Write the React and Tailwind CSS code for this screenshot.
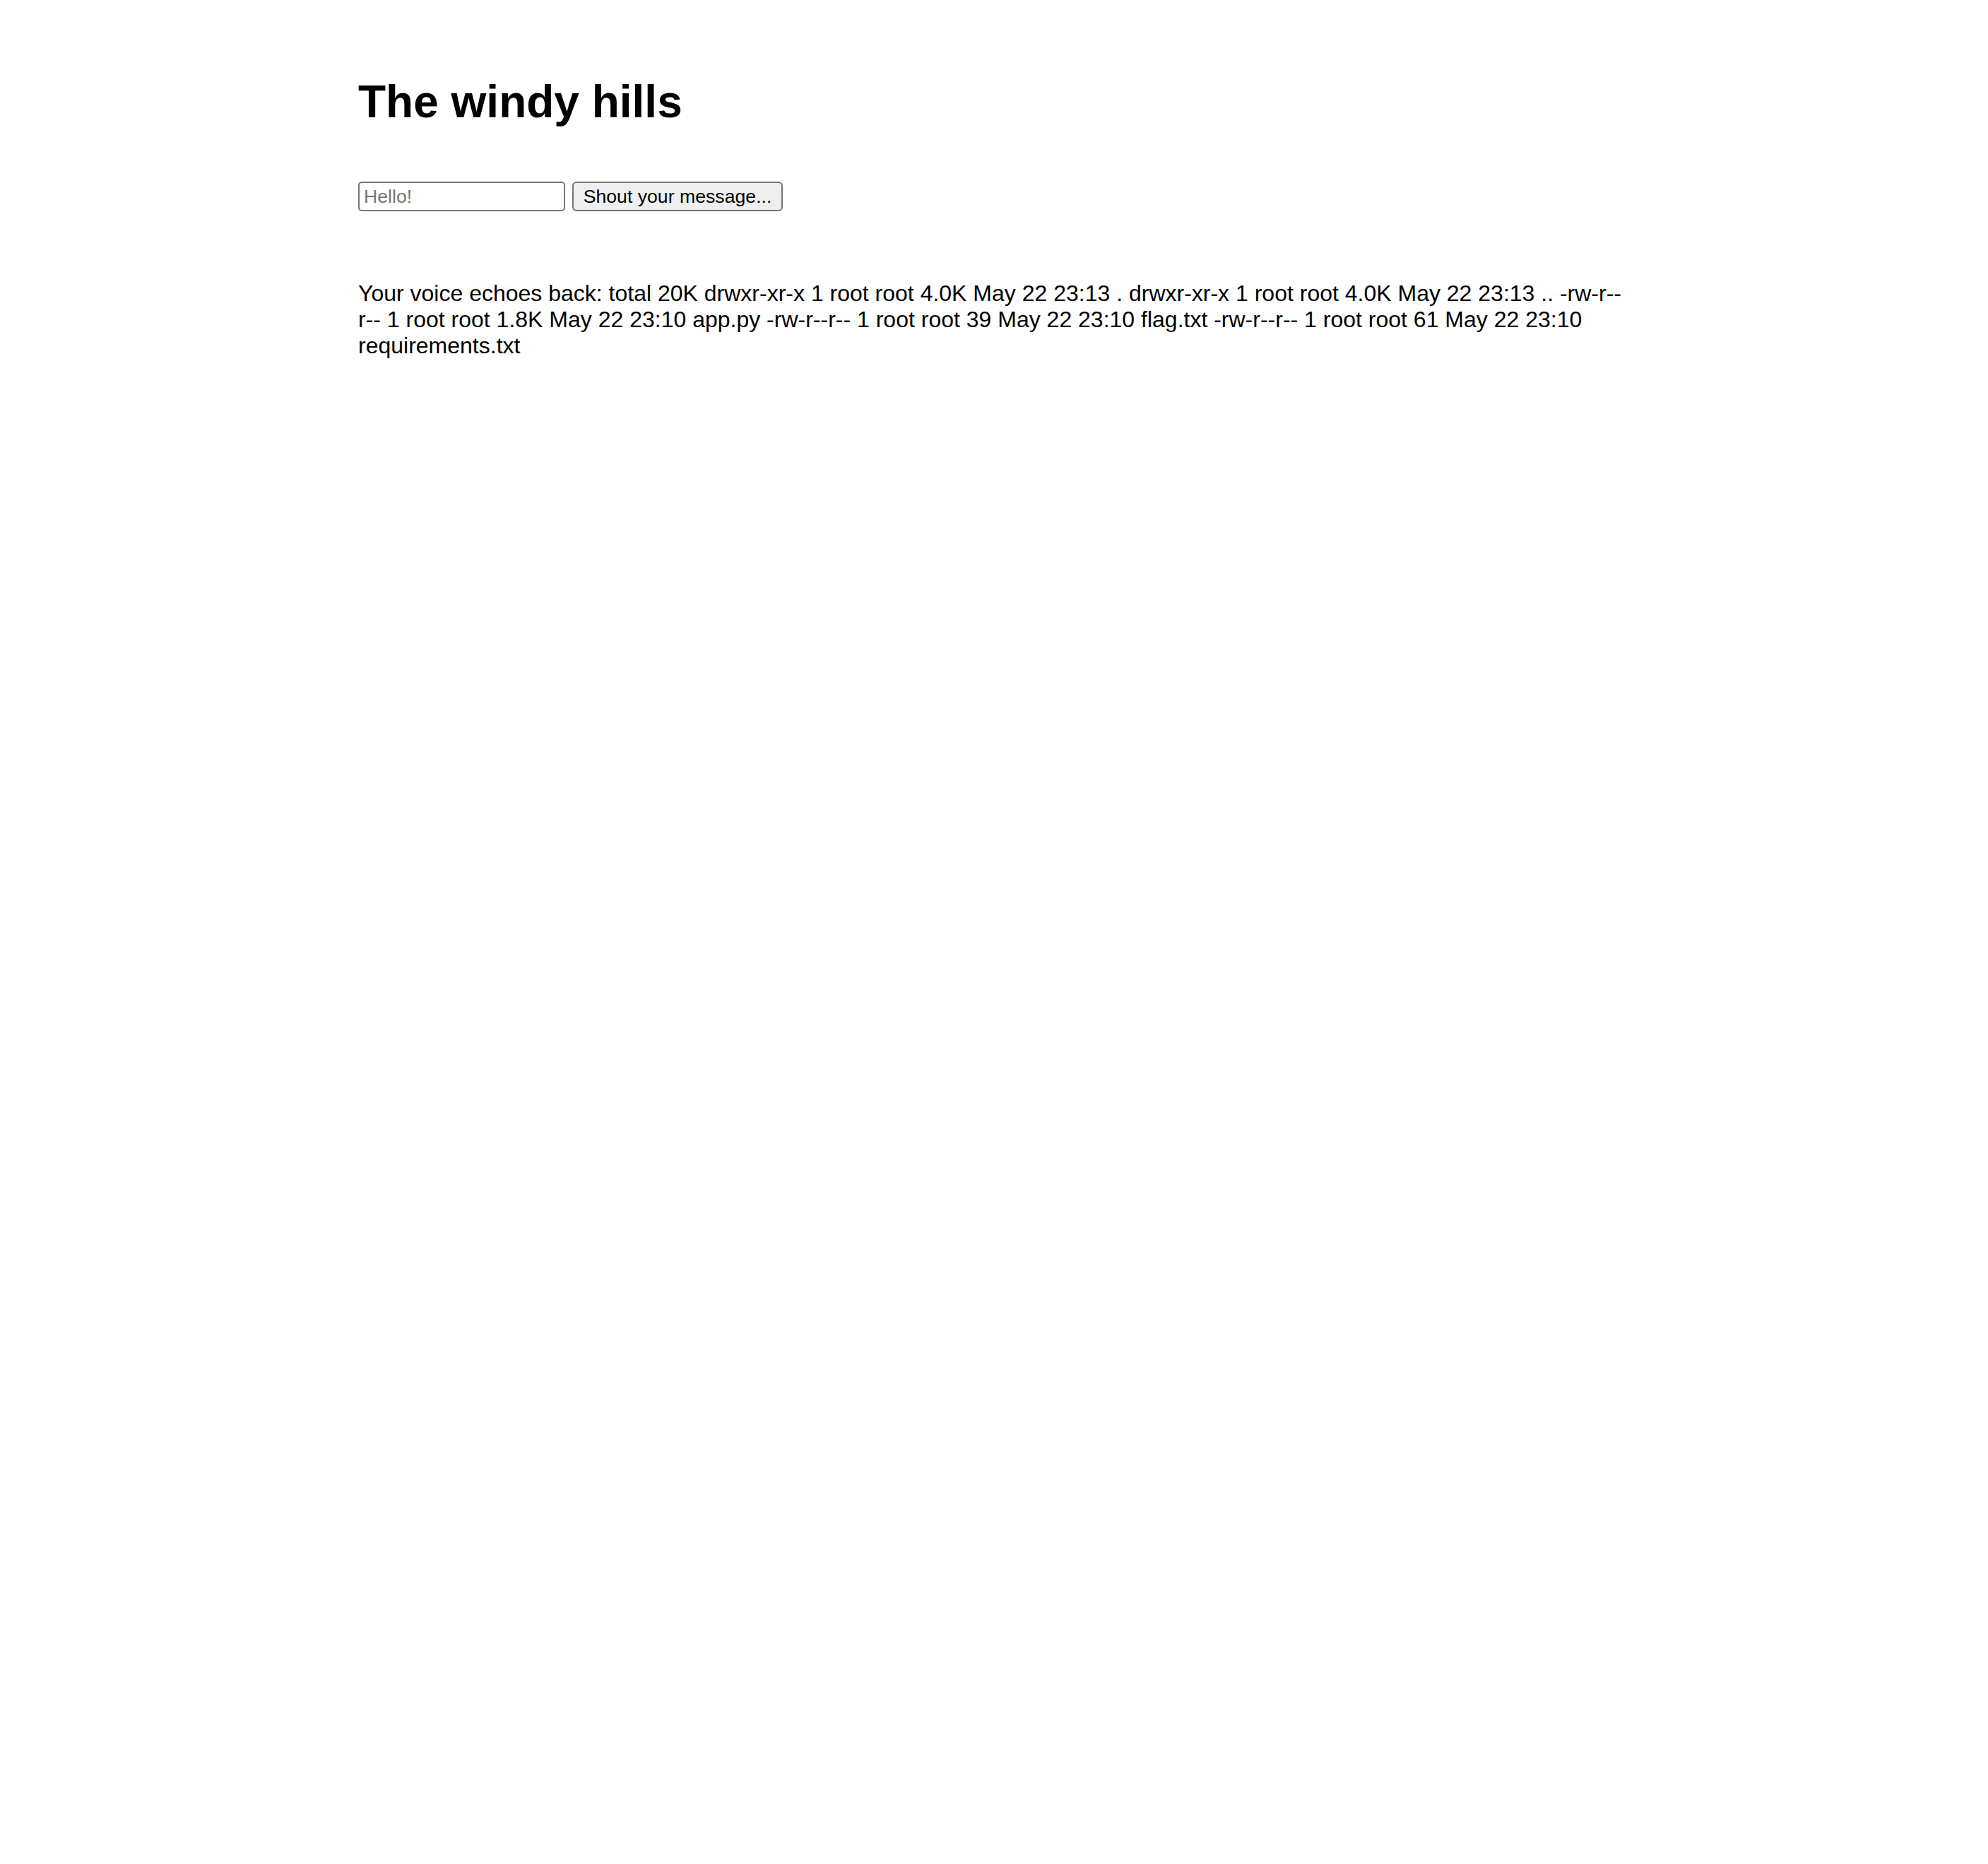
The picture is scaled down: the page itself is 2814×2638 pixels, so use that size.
import React from "react";

export default function App() {
  return (
    <div className="min-h-screen bg-white text-black" style={{ fontFamily: '"Liberation Sans", Arial, Helvetica, sans-serif' }}>
      <div className="w-[1800px] mx-auto pt-[107px]">
        <h1 className="text-[64px] font-bold leading-[normal] m-0">The windy hills</h1>
        <form className="flex items-center gap-[10px] mt-[76px]" onSubmit={(e) => e.preventDefault()}>
          <input
            type="text"
            placeholder="Hello!"
            className="w-[293px] h-[42px] border-2 border-[#767676] rounded-[5px] pl-[6px] text-[26.67px] bg-white placeholder:text-[#757575] outline-none"
            style={{ fontFamily: '"Liberation Sans", Arial, sans-serif' }}
          />
          <button
            type="submit"
            className="w-[298px] h-[42px] border-2 border-[#767676] rounded-[6px] bg-[#efefef] text-[26.67px] text-black flex items-center justify-center"
            style={{ fontFamily: '"Liberation Sans", Arial, sans-serif' }}
          >
            Shout your message...
          </button>
        </form>
        <p className="mt-[98px] text-[32px] leading-[normal]">
          Your voice echoes back: total 20K drwxr-xr-x 1 root root 4.0K May 22 23:13 . drwxr-xr-x 1 root root 4.0K May 22 23:13 .. -rw-r--r-- 1 root root 1.8K May 22 23:10 app.py -rw-r--r-- 1 root root 39 May 22 23:10 flag.txt -rw-r--r-- 1 root root 61 May 22 23:10 requirements.txt
        </p>
      </div>
    </div>
  );
}
